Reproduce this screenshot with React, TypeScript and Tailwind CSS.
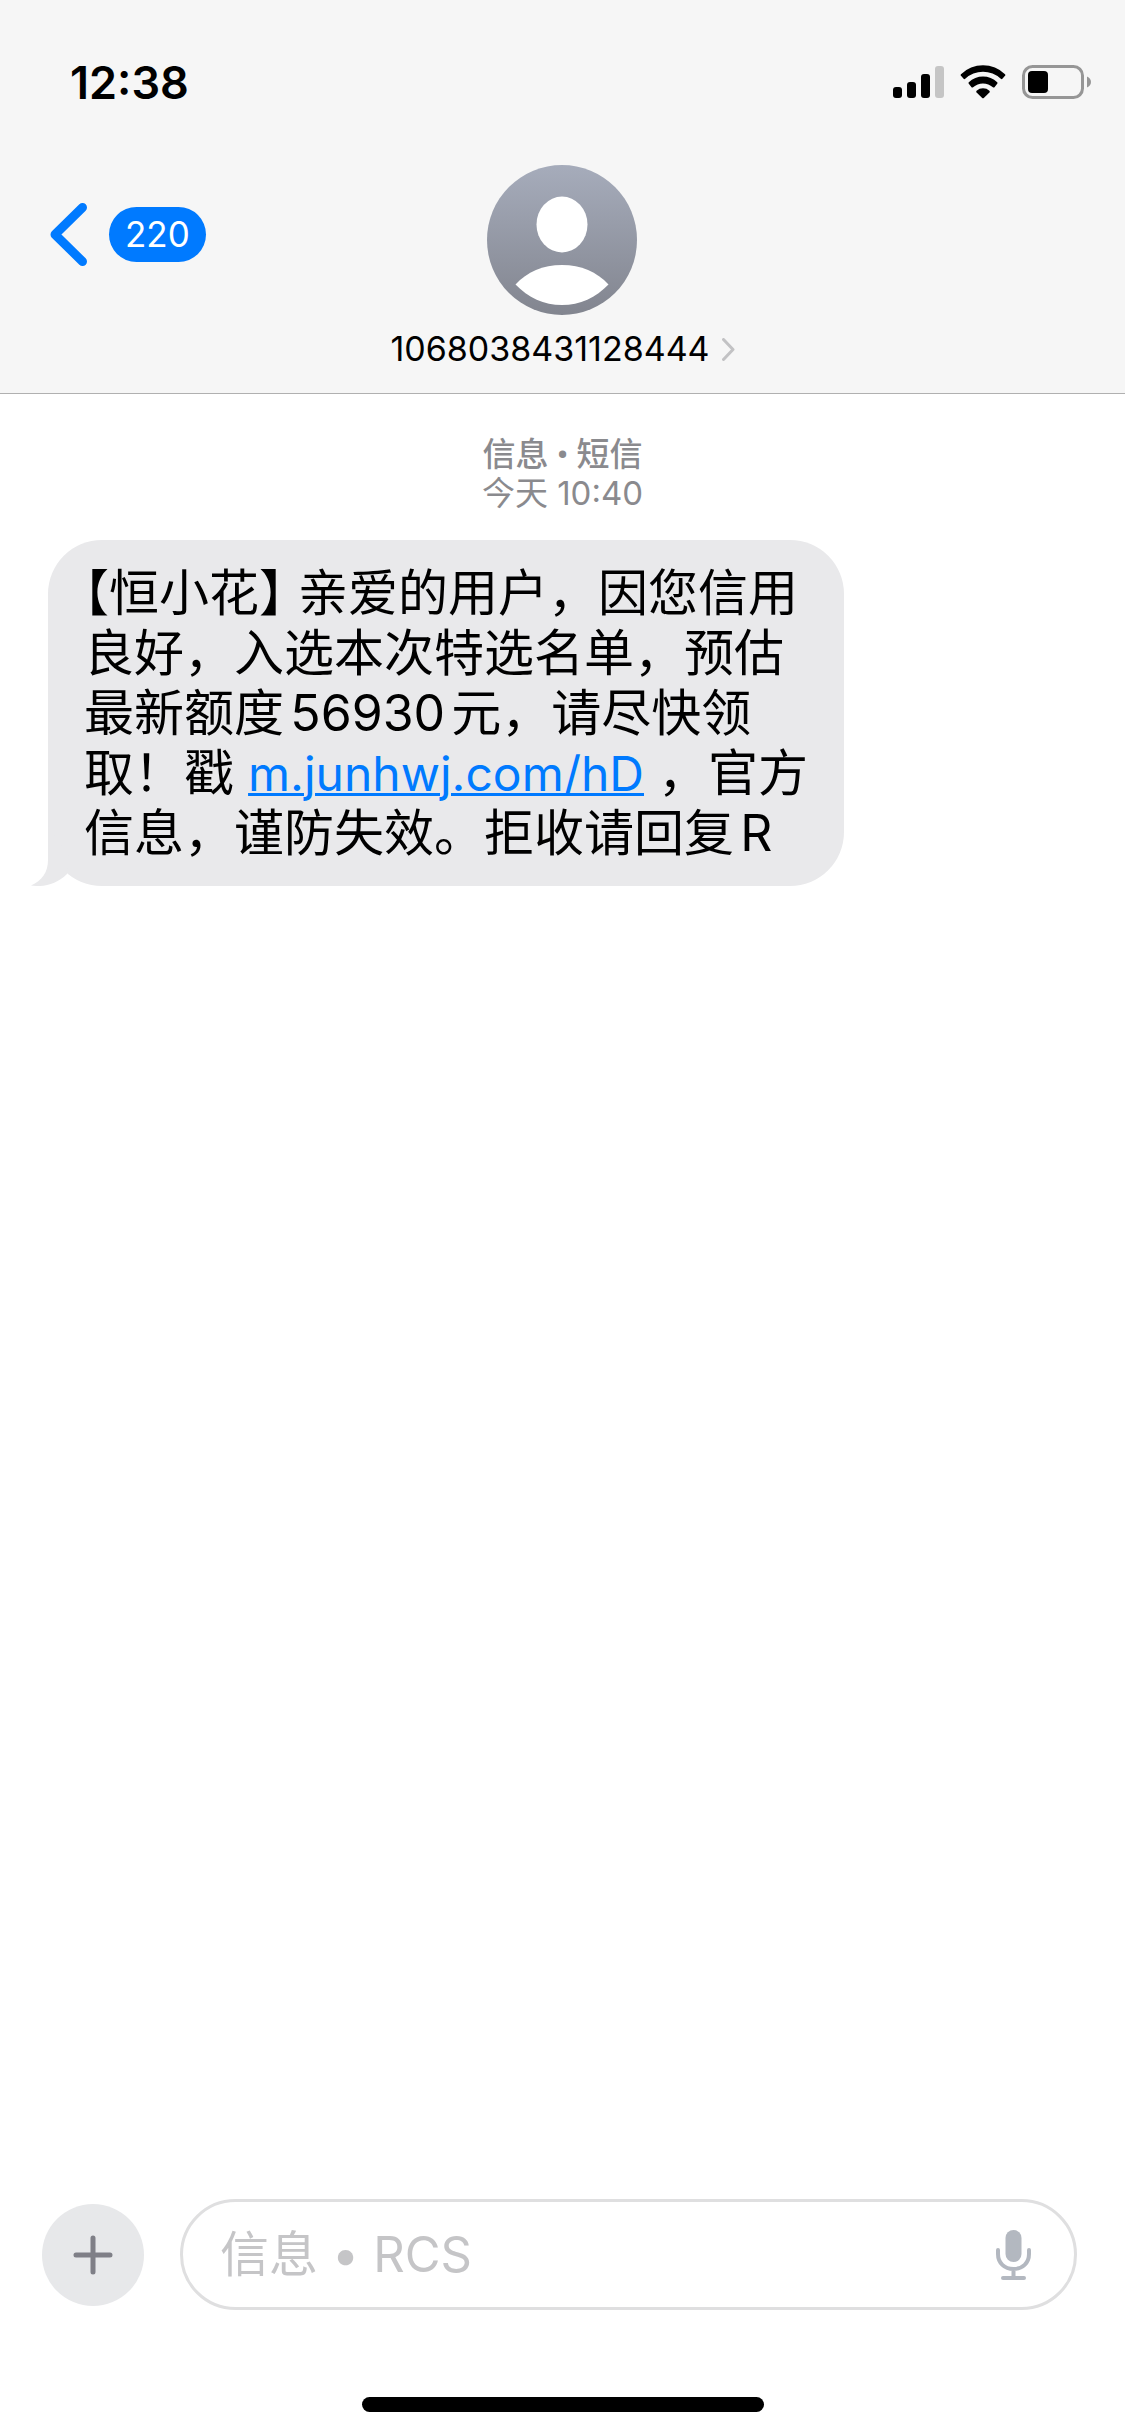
import type { ReactNode } from "react";

function SignalIcon() {
  return (
    <svg width="51" height="34" viewBox="0 0 51 34" aria-hidden="true">
      <rect x="0" y="22" width="9" height="11" rx="3" fill="#000" />
      <rect x="14" y="17" width="9" height="16" rx="3" fill="#000" />
      <rect x="28" y="9" width="9" height="24" rx="3" fill="#000" />
      <rect x="42" y="1" width="9" height="32" rx="3" fill="#c5c5c5" />
    </svg>
  );
}

function WifiIcon() {
  return (
    <svg width="46" height="34" viewBox="0 0 46 34" aria-hidden="true">
      <path d="M1 9.200A31.500 31.500 0 0 1 45 9.200Q45.800 10 45 10.800L42.400 13.800Q41.600 14.500 40.800 13.800A26 26 0 0 0 5.200 13.800Q4.400 14.500 3.600 13.800L1 10.800Q.2 10 1 9.200Z" />
      <path d="M8.800 17.200A20.500 20.500 0 0 1 37.200 17.200Q38 18 37.200 18.800L34.500 22.200Q33.700 23 32.900 22.200A14.800 14.800 0 0 0 13.100 22.200Q12.300 23 11.500 22.200L8.800 18.800Q8 18 8.800 17.200Z" />
      <path d="M16.600 25.800A9.500 9.500 0 0 1 29.400 25.800Q30.200 26.600 29.400 27.400L23.800 32.900Q23 33.600 22.200 32.900L16.600 27.400Q15.800 26.600 16.600 25.800Z" />
    </svg>
  );
}

function BatteryIcon() {
  return (
    <svg width="69" height="34" viewBox="0 0 69 34" aria-hidden="true">
      <rect x="1.5" y="1.5" width="59" height="31" rx="9" fill="none" stroke="#969696" strokeWidth="3" />
      <rect x="6" y="6" width="20" height="22" rx="4" fill="#000" />
      <path d="M65 11.500C67.500 12.500 69 14.500 69 17S67.500 21.500 65 22.500Z" fill="#969696" />
    </svg>
  );
}

function StatusBar() {
  return (
    <div className="flex h-[68px] items-center justify-between pl-[70px] pr-[34px]">
      <time className="text-[45px] leading-none font-semibold">12:38</time>
      <div className="flex items-center gap-4">
        <SignalIcon />
        <WifiIcon />
        <BatteryIcon />
      </div>
    </div>
  );
}

function Avatar() {
  return (
    <svg width="150" height="150" viewBox="0 0 150 150" aria-hidden="true">
      <defs>
        <linearGradient id="avatar" x1="0" y1="0" x2="0" y2="1">
          <stop offset="0" stopColor="#a6acbb" />
          <stop offset="1" stopColor="#82858f" />
        </linearGradient>
      </defs>
      <circle cx="75" cy="75" r="75" fill="url(#avatar)" />
      <ellipse cx="75" cy="59.500" rx="25.500" ry="28" fill="#fff" />
      <path d="M28.500 119.500C40 107 56 100 75 100S110 107 121.500 119.500C109 132.500 93 140 75 140S41 132.500 28.500 119.500Z" fill="#fff" />
    </svg>
  );
}

function Header() {
  return (
    <header className="border-b border-[#b0b0b0] bg-[#f6f6f6] pt-12 pb-6">
      <StatusBar />
      <div className="mt-[49px] grid grid-cols-[1fr_auto_1fr] items-start">
        <button type="button" aria-label="返回" className="mt-[38px] ml-[50px] flex items-center gap-[22px] justify-self-start">
          <svg width="37" height="63" viewBox="0 0 37 63" fill="none" stroke="#007aff" strokeWidth="9" strokeLinecap="round" strokeLinejoin="round" aria-hidden="true">
            <path d="M32.500 4.500L5 31.500L32.500 58.500" />
          </svg>
          <span className="flex h-[55px] items-center rounded-full bg-[#007aff] px-4 text-[35px] leading-none text-white">220</span>
        </button>
        <button type="button" className="flex flex-col items-center">
          <Avatar />
          <span className="mt-3.5 flex items-center gap-3 text-[34px] leading-10">
            1068038431128444
            <svg width="13" height="23" viewBox="0 0 13 23" fill="none" stroke="#c2c2c4" strokeWidth="3" strokeLinecap="round" strokeLinejoin="round" aria-hidden="true">
              <path d="M1.500 1.500L11 11.500L1.500 21.500" />
            </svg>
          </span>
        </button>
      </div>
    </header>
  );
}

function Bubble({ children }: { children: ReactNode }) {
  return (
    <div className="relative mt-7 ml-12 w-fit max-w-[796px] rounded-[54px] bg-[#e9e9eb] py-[23px] pr-8 pl-9 text-[50px] leading-[60px]">
      <svg className="absolute bottom-0 -left-[17px]" width="38" height="60" viewBox="0 0 38 60" fill="#e9e9eb" aria-hidden="true">
        <path d="M17 0V34C17 46 11 55 0 59.500C13 61.500 26 58 36 48L38 30Z" />
      </svg>
      <p className="[text-autospace:normal]">{children}</p>
    </div>
  );
}

function Composer() {
  return (
    <form className="flex items-center gap-9 pr-12 pl-[42px]" onSubmit={(e) => e.preventDefault()}>
      <button type="button" aria-label="添加" className="flex size-[102px] shrink-0 items-center justify-center rounded-full bg-[#e7e8ea]">
        <svg width="40" height="40" viewBox="0 0 40 40" stroke="#7f7f87" strokeWidth="5" strokeLinecap="round" aria-hidden="true">
          <path d="M20 3V37M3 20H37" />
        </svg>
      </button>
      <div className="flex h-[111px] min-w-0 flex-1 items-center rounded-full border-3 border-[#dfdfe0] pr-[43px] pl-[37px]">
        <input
          type="text"
          aria-label="信息"
          placeholder="信息 • RCS"
          className="h-full min-w-0 flex-1 text-[49px] outline-none placeholder:text-[#c5c5c7]"
        />
        <button type="button" aria-label="听写">
          <svg width="35" height="50" viewBox="0 0 35 50" fill="none" stroke="#b3b8c0" strokeWidth="4" strokeLinecap="round" aria-hidden="true">
            <rect x="9.500" y="0" width="16" height="32" rx="8" fill="#b3b8c0" stroke="none" />
            <path d="M2 20V24C2 33 8.500 39 17.500 39S33 33 33 24V20M17.500 39V48M7 48H28" />
          </svg>
        </button>
      </div>
    </form>
  );
}

export default function App() {
  return (
    <div className="flex min-h-screen flex-col bg-white font-['Inter','Noto_Sans_CJK_SC',sans-serif] text-black" lang="zh-CN">
      <Header />
      <main className="flex-1 pt-[42px]">
        <div className="text-center text-[33px] leading-[38px] text-[#8a8a8e]">
          <p className="font-['Roboto','Noto_Sans_CJK_SC',sans-serif] font-medium">信息 • 短信</p>
          <p>今天 10:40</p>
        </div>
        <Bubble>
          <span className="[font-feature-settings:'halt']">【恒小花】</span> 亲爱的用户，因您信用良好，入选本次特选名单，预估最新额度56930元，请尽快领取！戳{" "}
          <a href="#" className="text-[48px] leading-none text-[#007aff] underline decoration-3">m.junhwj.com/hD</a> ，官方信息，谨防失效。拒收请回复R
        </Bubble>
      </main>
      <Composer />
      <div className="mt-[87px] mb-6 h-[15px] w-[402px] self-center rounded-full bg-black" />
    </div>
  );
}
